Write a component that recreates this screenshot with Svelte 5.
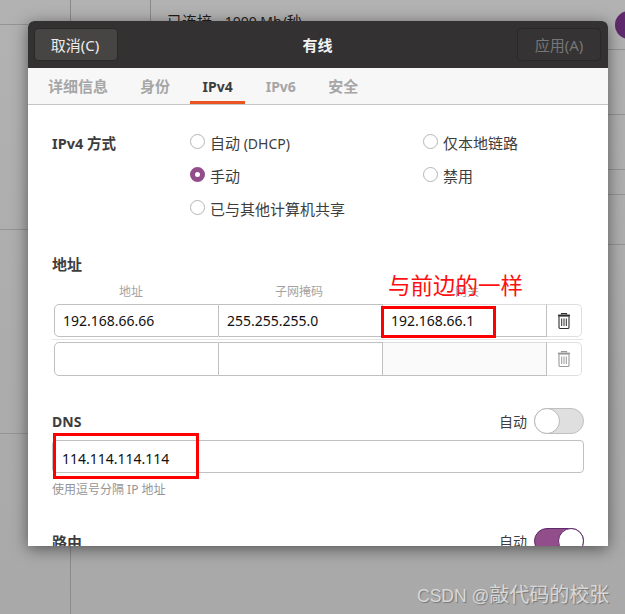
<script>
	const methods = [
		{ label: '自动', suffix: ' (DHCP)', checked: false },
		{ label: '仅本地链路', checked: false },
		{ label: '手动', checked: true },
		{ label: '禁用', checked: false },
		{ label: '已与其他计算机共享', checked: false }
	];
	const tabs = ['详细信息', '身份', 'IPv4', 'IPv6', '安全'];
	const rows = [
		{ address: '192.168.66.66', netmask: '255.255.255.0', gateway: '192.168.66.1', empty: false },
		{ address: '', netmask: '', gateway: '', empty: true }
	];
	// lines of the settings window behind the dialog
	const hLines = [
		{ x: 0, w: 28, y: 24 },
		{ x: 0, w: 28, y: 229 },
		{ x: 0, w: 28, y: 433 },
		{ x: 608, w: 17, y: 49 },
		{ x: 608, w: 17, y: 114 },
		{ x: 608, w: 17, y: 169 },
		{ x: 608, w: 17, y: 194 },
		{ x: 608, w: 17, y: 244 }
	];
</script>

{#snippet trash()}
	<svg class="trash" viewBox="0 0 12 16" width="12" height="16" aria-hidden="true">
		<path d="M3.5 1.6V.6h5v1" fill="none" stroke="currentColor" stroke-width="1.2" />
		<rect x="0" y="1.6" width="12" height="2" fill="currentColor" />
		<path d="M1 3.5v10.7a1.3 1.3 0 0 0 1.3 1.3h7.4a1.3 1.3 0 0 0 1.3-1.3V3.5" fill="none" stroke="currentColor" stroke-width="1.1" />
		<path d="M3.7 5.5v7.5M6 5.5v7.5M8.3 5.5v7.5" fill="none" stroke="currentColor" stroke-width="1" />
	</svg>
{/snippet}

<div class="desktop">
	<span class="behind-text">已连接 - <span class="num">1000 Mb/</span>秒</span>
	<span class="avatar"></span>
	<span class="vline" style="left: 70px; top: 0; height: 21px"></span>
	<span class="vline" style="left: 150px; top: 0; height: 21px"></span>
	<span class="vline" style="left: 70px; top: 546px; height: 68px"></span>
	{#each hLines as l}
		<span class="hline" style="left: {l.x}px; top: {l.y}px; width: {l.w}px"></span>
	{/each}

	<section class="dialog">
		<header class="titlebar">
			<button class="btn cancel">取消(C)</button>
			<h1>有线</h1>
			<button class="btn disabled">应用(A)</button>
		</header>

		<nav class="tabs">
			{#each tabs as tab}
				<span class="tab" class:latin={tab.startsWith('IP')} class:active={tab === 'IPv4'}>{tab}</span>
			{/each}
		</nav>

		<div class="content">
			<div class="method">
				<div class="strong method-label">IPv4 方式</div>
				<div class="radios">
					{#each methods as m}
						<label class="radio">
							<span class="dot" class:checked={m.checked}></span>
							<span class="radio-text">{m.label}{#if m.suffix}<span class="num">{m.suffix}</span>{/if}</span>
						</label>
					{/each}
				</div>
			</div>

			<div class="strong addr-title">地址</div>
			<div class="addr-head">
				<span>地址</span>
				<span>子网掩码</span>
				<span>网关</span>
			</div>
			{#each rows as row, i}
				{#if i > 0}
					<div class="addr-sep"></div>
				{/if}
				<div class="addr-row" class:second={row.empty}>
					<div class="cell">{row.address}</div>
					<div class="cell">{row.netmask}</div>
					<div class="cell light" class:shaded={row.empty}>{row.gateway}</div>
					<div class="cell del" class:muted={row.empty}>{@render trash()}</div>
				</div>
			{/each}

			<div class="section-head dns-head">
				<span class="strong dns-label">DNS</span>
				<span class="auto">自动<span class="switch"><span class="knob"></span></span></span>
			</div>
			<div class="input">114.114.114.114</div>
			<div class="hint">使用逗号分隔 IP 地址</div>

			<div class="section-head route-head">
				<span class="strong">路由</span>
				<span class="auto">自动<span class="switch on"><span class="knob"></span></span></span>
			</div>
		</div>
	</section>

	<span class="note">与前边的一样</span>
	<span class="redbox gateway-box"></span>
	<span class="redbox dns-box"></span>
	<span class="watermark"><span class="wm-latin">CSDN @</span>敲代码的校张</span>
</div>

<style>
	:global(body) {
		margin: 0;
		background: #acacac;
	}

	.desktop {
		position: relative;
		width: 625px;
		height: 614px;
		overflow: hidden;
		padding: 21px 0 0 28px;
		box-sizing: border-box;
		background: linear-gradient(#b2b2b2, #acacac 60%, #a9a9a9);
		font-family: 'Noto Sans', 'Noto Sans CJK SC', sans-serif;
		font-size: 15px;
		color: #3d3d3d;
	}

	.num {
		font-size: 14px;
	}

	.behind-text {
		position: absolute;
		left: 167px;
		top: 10px;
		color: #1c1c1c;
	}

	.avatar {
		position: absolute;
		left: 615px;
		top: 11px;
		width: 28px;
		height: 28px;
		border-radius: 50%;
		background: #5f2a6c;
	}

	.vline {
		position: absolute;
		width: 1px;
		background: #8a8a8a;
	}

	.hline {
		position: absolute;
		height: 1px;
		background: #949494;
	}

	.dialog {
		position: relative;
		width: 580px;
		height: 525px;
		overflow: hidden;
		display: flex;
		flex-direction: column;
		background: #fff;
		border-radius: 6px 6px 0 0;
		box-shadow: 0 3px 16px rgba(0, 0, 0, 0.5);
	}

	.titlebar {
		height: 47px;
		flex: none;
		box-sizing: border-box;
		padding: 7px 7px 7px 6px;
		display: flex;
		align-items: center;
		justify-content: space-between;
		background: #333131;
	}

	.titlebar h1 {
		margin: 0;
		font-size: 15px;
		font-weight: 700;
		color: #f2f2f2;
	}

	.btn {
		width: 84px;
		height: 33px;
		padding: 0;
		border: 1px solid #2a2828;
		border-radius: 4px;
		background: #474543;
		color: #ececec;
		font: inherit;
	}

	.btn.cancel {
		padding-right: 2px;
	}

	.btn.disabled {
		background: #353333;
		color: #777;
	}

	.tabs {
		height: 37px;
		flex: none;
		box-sizing: border-box;
		padding-left: 20px;
		display: flex;
		gap: 32px;
		background: #f7f7f7;
		border-bottom: 1px solid #c4c4c4;
	}

	.tab {
		position: relative;
		line-height: 37px;
		font-weight: 700;
		color: #a6a6a6;
	}

	.tab.latin {
		font-size: 14px;
		padding: 0 0.5px;
	}

	.tab.active {
		color: #3d3d3d;
	}

	.tab.active::after {
		content: '';
		position: absolute;
		left: -12px;
		right: -12px;
		bottom: 0;
		height: 3px;
		background: #e95420;
	}

	.content {
		padding: 20px 24px 0 24px;
	}

	.strong {
		font-weight: 700;
		color: #3d3d3d;
	}

	.method {
		display: flex;
	}

	.method-label {
		width: 138px;
		flex: none;
		font-size: 14.5px;
		line-height: 36px;
	}

	.radios {
		display: grid;
		grid-template-columns: 233px 1fr;
		grid-auto-rows: 33px;
	}

	.radio {
		display: flex;
		align-items: center;
		gap: 5px;
	}

	.radio-text {
		padding-top: 2px;
	}

	.dot {
		width: 15px;
		height: 15px;
		box-sizing: border-box;
		border: 1px solid #b6b6b6;
		border-radius: 50%;
		background: #fff;
	}

	.dot.checked {
		border: 5px solid #924d8b;
	}

	.addr-title {
		margin-top: 30px;
		line-height: 20px;
	}

	.addr-head {
		margin: 10px 0 5px -5px;
		display: grid;
		grid-template-columns: repeat(3, 168px);
		font-size: 12px;
		line-height: 15px;
		text-align: center;
		color: #a3a3a3;
	}

	.addr-row {
		margin-left: 2px;
		width: 528px;
		height: 33px;
		display: grid;
		grid-template-columns: 165px 164px 164px 35px;
		box-sizing: border-box;
		font-size: 14px;
	}

	.addr-row.second {
		height: 34px;
	}

	.addr-sep {
		height: 1px;
		margin: 2px 0;
		width: 531px;
		background: #e6e6e6;
	}

	.cell {
		box-sizing: border-box;
		padding-left: 8px;
		line-height: 31px;
		border: 1px solid #c0c0c0;
		border-left: 0;
		color: #111;
	}

	.cell:first-child {
		border-left: 1px solid #c0c0c0;
		border-radius: 5px 0 0 5px;
	}

	.cell.light {
		border-color: #dcdcdc #c0c0c0 #c0c0c0 #c0c0c0;
		border-left: 0;
	}

	.cell.shaded {
		background: #fafafa;
	}

	.cell.del {
		padding: 0 1px 0 0;
		display: flex;
		align-items: center;
		justify-content: center;
		border-color: #dfdfdf;
		border-radius: 0 5px 5px 0;
		color: #2e2e2e;
	}

	.cell.del.muted {
		color: #999;
	}

	.section-head {
		display: flex;
		align-items: center;
		justify-content: space-between;
		height: 26px;
	}

	.dns-head {
		margin-top: 32px;
		margin-bottom: 6px;
	}

	.dns-label {
		font-size: 14px;
	}

	.auto {
		display: flex;
		align-items: center;
		gap: 7px;
		font-size: 14px;
	}

	.switch {
		position: relative;
		display: block;
		width: 50px;
		height: 26px;
		box-sizing: border-box;
		border: 1px solid #c0c0c0;
		border-radius: 13px;
		background: #dfdfdf;
	}

	.knob {
		position: absolute;
		left: -1px;
		top: -1px;
		width: 26px;
		height: 26px;
		box-sizing: border-box;
		border: 1px solid #b8b8b8;
		border-radius: 50%;
		background: #fff;
	}

	.switch.on {
		background: #924d8b;
		border-color: #5f2a6c;
	}

	.switch.on .knob {
		left: 23px;
		border-color: #5f2a6c;
	}

	.input {
		height: 33px;
		box-sizing: border-box;
		padding-left: 9px;
		font-size: 14px;
		line-height: 35px;
		border: 1px solid #c0c0c0;
		border-radius: 4px;
		color: #111;
	}

	.hint {
		margin-top: 9px;
		font-size: 12px;
		line-height: 16px;
		color: #959595;
	}

	.route-head {
		margin-top: 30px;
	}

	.note {
		position: absolute;
		left: 388px;
		top: 270px;
		font-size: 22.5px;
		line-height: 32px;
		font-weight: 400;
		color: #ff1010;
		white-space: nowrap;
	}

	.redbox {
		position: absolute;
		box-sizing: border-box;
		border: 3px solid #f00;
	}

	.gateway-box {
		left: 381px;
		top: 306px;
		width: 115px;
		height: 32px;
	}

	.dns-box {
		left: 53px;
		top: 433px;
		width: 146px;
		height: 46px;
	}

	.watermark {
		position: absolute;
		left: 417px;
		top: 581px;
		font-size: 20px;
		line-height: 28px;
		color: #d8d8d8;
		text-shadow: 1px 1px 1px #777;
		white-space: nowrap;
	}

	.wm-latin {
		font-family: 'Liberation Sans', sans-serif;
		font-size: 17.5px;
	}
</style>
